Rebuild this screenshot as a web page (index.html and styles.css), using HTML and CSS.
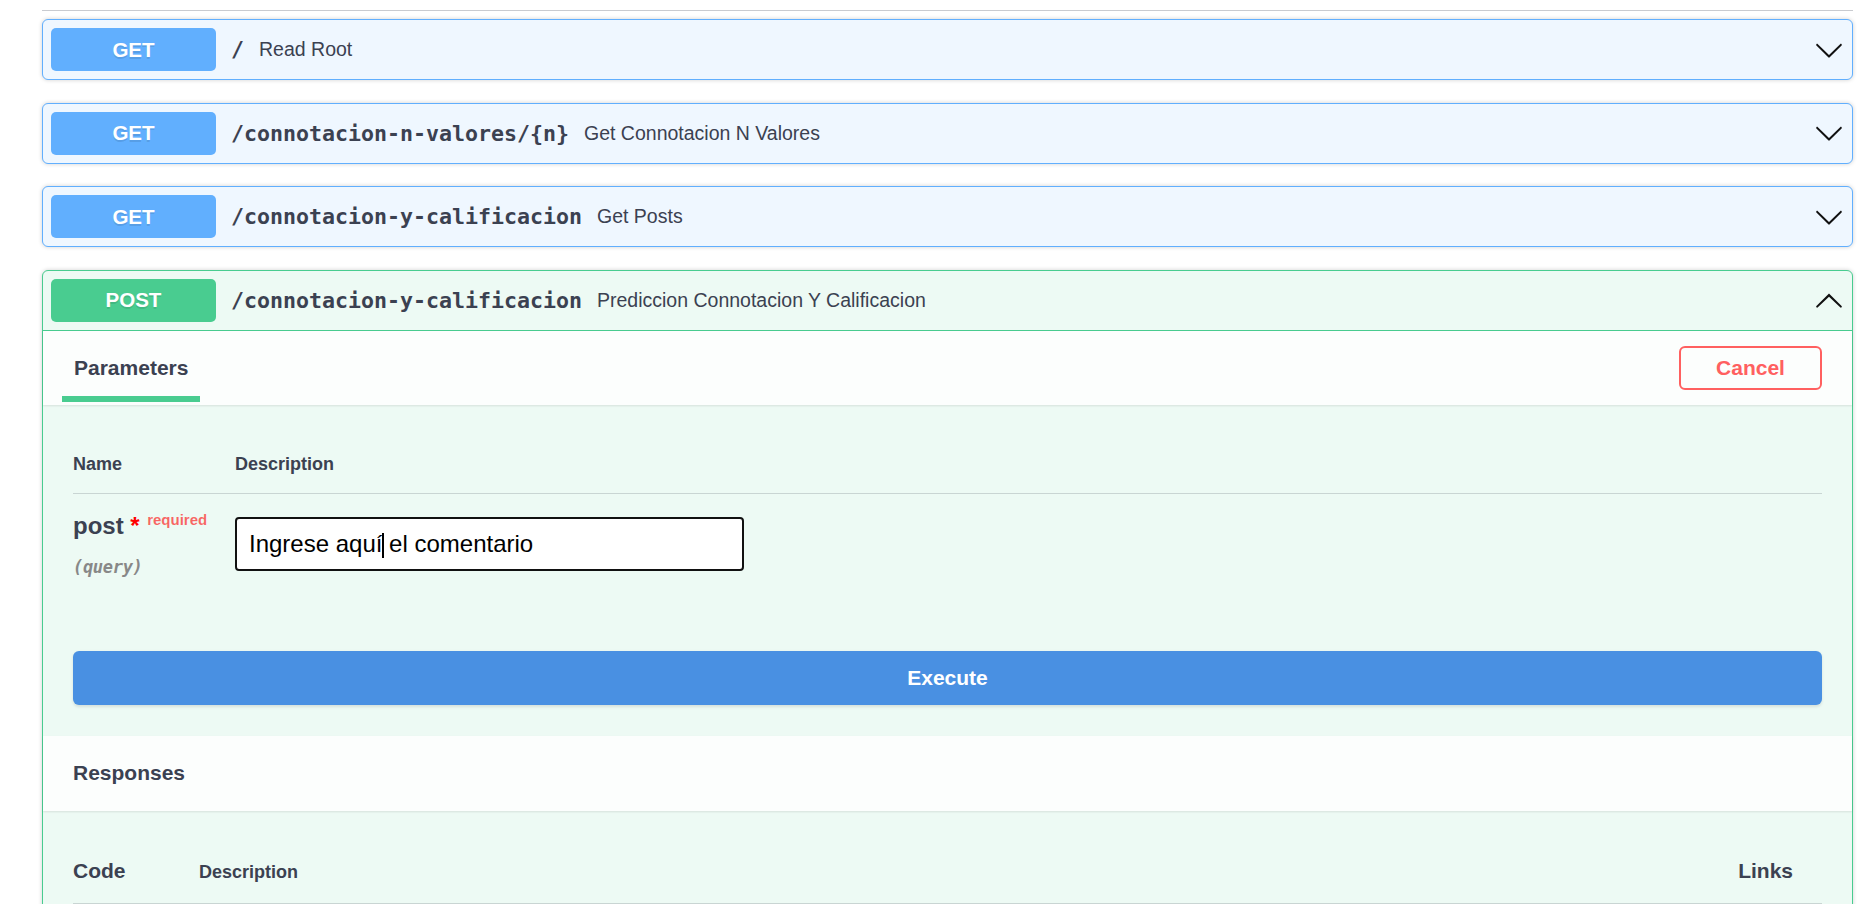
FILE: index.html
```html
<!DOCTYPE html>
<html lang="es">
<head>
<meta charset="utf-8">
<title>FastAPI - Swagger UI</title>
<link rel="stylesheet" href="styles.css">
</head>
<body>
<div class="wrapper">
  <div class="tag-rule"></div>

  <div class="opblock opblock-get">
    <div class="summary">
      <span class="method method-get">GET</span>
      <span class="path">/</span>
      <span class="desc">Read Root</span>
      <svg class="arrow" viewBox="0 0 20 20"><path d="M17.418 6.109c.272-.268.709-.268.979 0s.271.701 0 .969l-7.908 7.83c-.27.268-.707.268-.979 0l-7.908-7.83c-.27-.268-.27-.701 0-.969.271-.268.709-.268.979 0L10 13.25l7.418-7.141z"/></svg>
    </div>
  </div>

  <div class="opblock opblock-get">
    <div class="summary">
      <span class="method method-get">GET</span>
      <span class="path">/connotacion-n-valores/{n}</span>
      <span class="desc">Get Connotacion N Valores</span>
      <svg class="arrow" viewBox="0 0 20 20"><path d="M17.418 6.109c.272-.268.709-.268.979 0s.271.701 0 .969l-7.908 7.83c-.27.268-.707.268-.979 0l-7.908-7.83c-.27-.268-.27-.701 0-.969.271-.268.709-.268.979 0L10 13.25l7.418-7.141z"/></svg>
    </div>
  </div>

  <div class="opblock opblock-get">
    <div class="summary">
      <span class="method method-get">GET</span>
      <span class="path">/connotacion-y-calificacion</span>
      <span class="desc">Get Posts</span>
      <svg class="arrow" viewBox="0 0 20 20"><path d="M17.418 6.109c.272-.268.709-.268.979 0s.271.701 0 .969l-7.908 7.83c-.27.268-.707.268-.979 0l-7.908-7.83c-.27-.268-.27-.701 0-.969.271-.268.709-.268.979 0L10 13.25l7.418-7.141z"/></svg>
    </div>
  </div>

  <div class="opblock opblock-post is-open">
    <div class="summary">
      <span class="method method-post">POST</span>
      <span class="path">/connotacion-y-calificacion</span>
      <span class="desc">Prediccion Connotacion Y Calificacion</span>
      <svg class="arrow" viewBox="0 0 20 20"><path d="M17.418 14.908c.272.268.709.268.979 0s.271-.701 0-.969l-7.908-7.83c-.27-.268-.707-.268-.979 0l-7.908 7.83c-.27.268-.27.701 0 .969.271.268.709.268.979 0L10 7.767l7.418 7.141z"/></svg>
    </div>

    <div class="op-body">
      <div class="section-header">
        <div class="tab">
          <h4 class="tab-title">Parameters</h4>
          <div class="tab-line"></div>
        </div>
        <button class="btn-cancel">Cancel</button>
      </div>

      <div class="params">
        <div class="params-head">
          <div>Name</div>
          <div>Description</div>
        </div>
        <div class="params-row">
          <div class="param-name-col">
            <div class="param-name">post<span class="star">&nbsp;*</span><span class="req">required</span></div>
            <div class="param-in">(query)</div>
          </div>
          <div class="param-desc-col">
            <div class="input"><span class="input-text">Ingrese aquí<span class="caret"></span> el comentario</span></div>
          </div>
        </div>
        <button class="btn-execute">Execute</button>
      </div>

      <div class="section-header responses-header">
        <h4 class="tab-title">Responses</h4>
      </div>

      <div class="responses">
        <div class="responses-head">
          <div class="col-code">Code</div>
          <div class="col-desc">Description</div>
          <div class="col-links">Links</div>
        </div>
      </div>
    </div>
  </div>
</div>
</body>
</html>
```

FILE: styles.css
```css
* { box-sizing: border-box; }

html, body {
  margin: 0;
  background: #fff;
}

body {
  font-family: "Liberation Sans", Arial, sans-serif;
  color: #3b4151;
}

.wrapper {
  padding: 10px 22px 0 42px;
}

.tag-rule {
  height: 1px;
  background: #c9cbd0;
  margin-bottom: 8px;
}

.opblock {
  border: 1px solid;
  border-radius: 6px;
  box-shadow: 0 0 4px rgba(0, 0, 0, .19);
  margin-bottom: 22.67px;
}

.opblock-get {
  background: #eff7ff;
  border-color: #61affe;
}

.opblock-post {
  background: #edfaf4;
  border-color: #49cc90;
}

.summary {
  display: flex;
  align-items: center;
  padding: 8px;
}

.is-open .summary {
  border-bottom: 1px solid #49cc90;
}

.method {
  flex: none;
  width: 165px;
  height: 43px;
  border-radius: 5px;
  display: flex;
  align-items: center;
  justify-content: center;
  color: #fff;
  font-weight: 700;
  font-size: 20.5px;
  text-shadow: 0 1.5px 0 rgba(0, 0, 0, .1);
}

.method-get { background: #61affe; }
.method-post { background: #49cc90; }

.path {
  font-family: "DejaVu Sans Mono", "Liberation Mono", monospace;
  font-weight: 700;
  font-size: 21.6px;
  padding: 0 15px;
  color: #3b4151;
}

.desc {
  flex: 1;
  font-size: 19.5px;
  color: #3b4151;
}

.arrow {
  flex: none;
  width: 30px;
  height: 30px;
  fill: #111;
}

.section-header {
  display: flex;
  justify-content: space-between;
  align-items: center;
  background: rgba(255, 255, 255, .8);
  box-shadow: 0 1px 2px rgba(0, 0, 0, .1);
  padding: 0 30px 0 19px;
}

.tab {
  align-self: stretch;
  padding: 25px 0 3px;
}

.tab-title {
  margin: 0;
  padding: 0 12px;
  font-size: 21px;
  line-height: 24px;
  font-weight: 700;
  color: #3b4151;
}

.tab-line {
  height: 6px;
  margin-top: 16px;
  background: #49cc90;
}

.btn-cancel {
  width: 143px;
  height: 44px;
  border: 2px solid #ff6060;
  border-radius: 6px;
  background: transparent;
  color: #ff6060;
  font: 700 21px "Liberation Sans", Arial, sans-serif;
  padding: 0;
}

.params {
  padding: 30px 30px 31px;
}

.params-head {
  display: grid;
  grid-template-columns: 162px 1fr;
  font-size: 18px;
  line-height: 22px;
  font-weight: 700;
  padding: 18px 0;
  border-bottom: 1px solid rgba(59, 65, 81, .2);
}

.params-row {
  display: grid;
  grid-template-columns: 162px 1fr;
  padding: 15px 0;
}

.param-name {
  font-size: 24px;
  line-height: 22px;
  font-weight: 700;
  white-space: nowrap;
}

.star {
  color: #f00;
}

.req {
  font-size: 15px;
  color: rgba(255, 0, 0, .6);
  vertical-align: 9px;
  padding-left: 7.5px;
}

.param-in {
  margin-top: 18px;
  font-family: "DejaVu Sans Mono", "Liberation Mono", monospace;
  font-style: italic;
  font-weight: 700;
  font-size: 17px;
  letter-spacing: -0.3px;
  line-height: 24px;
  color: #888;
}

.input {
  margin-top: 8px;
  width: 509px;
  height: 54px;
  border: 2px solid #111;
  border-radius: 4px;
  background: #fff;
  padding: 0 12px;
  display: flex;
  align-items: center;
}

.input-text {
  font-size: 24px;
  color: #000;
  white-space: pre;
}

.caret {
  display: inline-block;
  width: 2px;
  height: 25px;
  margin-right: -2px;
  background: #000;
  vertical-align: middle;
}

.btn-execute {
  display: block;
  width: 100%;
  height: 54px;
  margin-top: 57px;
  border: 0;
  border-radius: 6px;
  background: #4990e2;
  color: #fff;
  font: 700 21px "Liberation Sans", Arial, sans-serif;
  box-shadow: 0 1.5px 3px rgba(0, 0, 0, .1);
}

.responses-header {
  padding: 25px 30px 26px;
}

.responses-header .tab-title {
  padding: 0;
}

.responses {
  padding: 0 30px 60px;
}

.responses-head {
  display: grid;
  grid-template-columns: 126px 1fr auto;
  align-items: baseline;
  padding: 48px 0 19px;
  border-bottom: 2px solid rgba(59, 65, 81, .2);
  font-weight: 700;
  line-height: 24px;
}

.col-code { font-size: 21px; }
.col-desc { font-size: 18px; }
.col-links { font-size: 21px; padding-right: 29px; }
```
